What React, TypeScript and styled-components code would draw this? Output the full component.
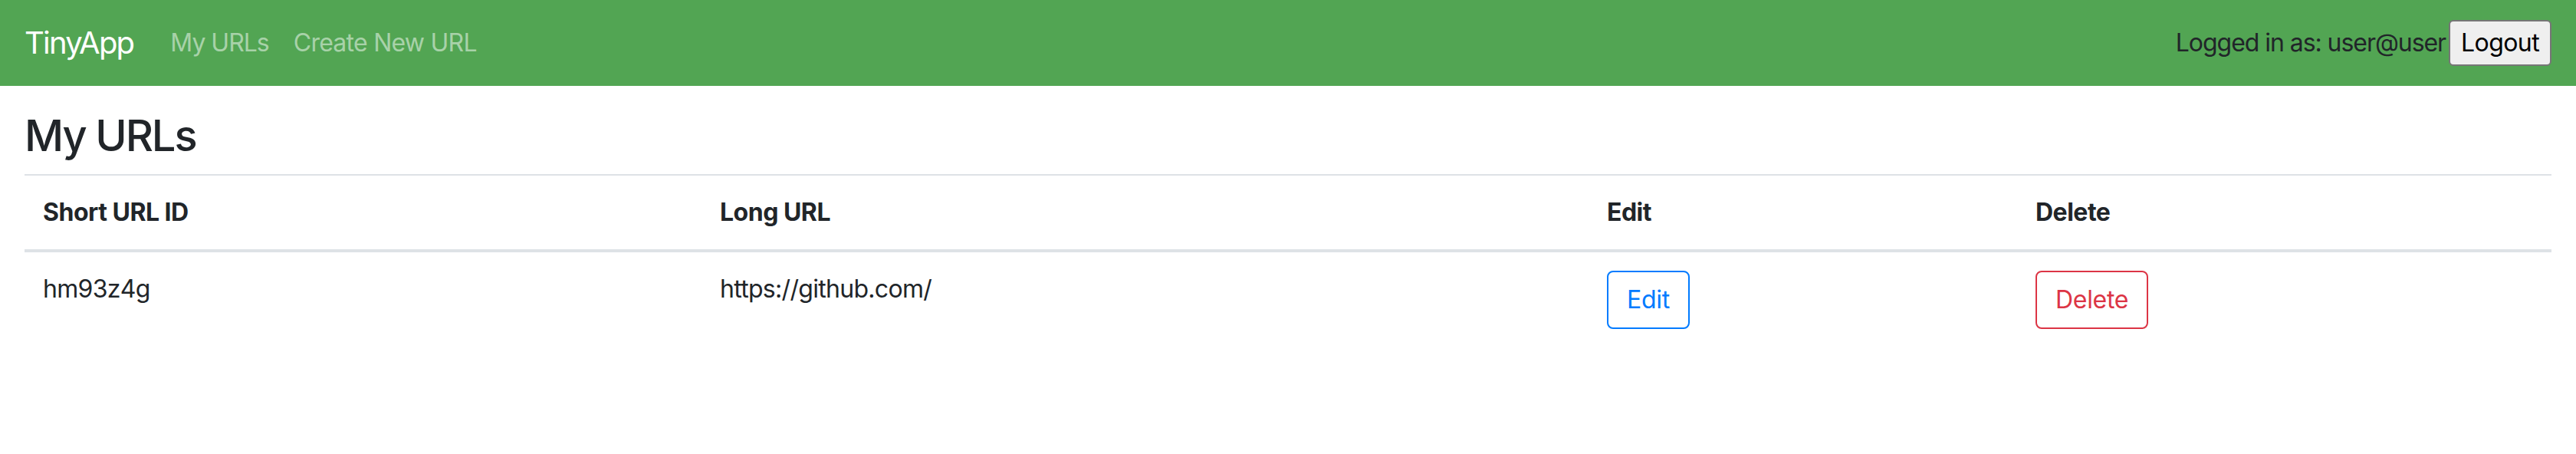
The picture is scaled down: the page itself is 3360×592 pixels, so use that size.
import React from "react";
import styled, { createGlobalStyle } from "styled-components";

const GlobalStyle = createGlobalStyle`
  *, *::before, *::after { box-sizing: border-box; }
  html, body { margin: 0; padding: 0; background: #fff; }
  body {
    font-family: Inter, "Noto Sans", "Liberation Sans", sans-serif;
    font-size: 32px;
    line-height: 1.5;
    color: #212529;
  }
`;

const NavBar = styled.nav`
  display: flex;
  align-items: center;
  justify-content: space-between;
  height: 112px;
  padding: 16px 32px;
  background: #52a553;
`;

const NavLeft = styled.div`
  display: flex;
  align-items: center;
`;

const Brand = styled.a`
  font-size: 40px;
  line-height: 60px;
  padding: 10px 0;
  margin-right: 32px;
  color: #fff;
  text-decoration: none;
  letter-spacing: -1.8px;
`;

const NavLink = styled.a<{ $ls: number }>`
  padding: 16px;
  font-size: 32px;
  line-height: 48px;
  color: rgba(255, 255, 255, 0.5);
  text-decoration: none;
  letter-spacing: ${(p) => p.$ls}px;
`;

const NavRight = styled.div`
  display: flex;
  align-items: center;
`;

const UserText = styled.span`
  font-size: 32px;
  line-height: 48px;
  color: #212529;
  letter-spacing: -1.05px;
  margin-right: 4px;
`;

const LogoutButton = styled.button`
  height: 60px;
  padding: 0 14px;
  font-family: inherit;
  font-size: 32px;
  line-height: 48px;
  color: #000;
  background: #efefef;
  border: 2px solid #767676;
  border-radius: 6px;
  letter-spacing: -0.6px;
`;

const Main = styled.main`
  padding: 32px 32px 0;
`;

const Title = styled.h1`
  margin: 0 0 16px;
  font-size: 56px;
  font-weight: 500;
  line-height: 1.2;
  color: #212529;
  letter-spacing: -2.1px;
`;

const Table = styled.table`
  width: 100%;
  border-collapse: collapse;
  color: #212529;
`;

const HeadCell = styled.th<{ $w: number }>`
  width: ${(p) => p.$w}px;
  padding: 24px;
  text-align: left;
  font-weight: 700;
  line-height: 48px;
  border-top: 2px solid #dee2e6;
  border-bottom: 4px solid #dee2e6;
  vertical-align: bottom;
  letter-spacing: -0.5px;
`;

const Cell = styled.td`
  padding: 24px;
  line-height: 48px;
  vertical-align: top;
  border-top: 2px solid #dee2e6;
  letter-spacing: -0.7px;
`;

const OutlineButton = styled.button<{ $color: string }>`
  display: inline-block;
  padding: 12px 24px;
  font-family: inherit;
  font-size: 32px;
  line-height: 48px;
  color: ${(p) => p.$color};
  background: transparent;
  border: 2px solid ${(p) => p.$color};
  border-radius: 8px;
  letter-spacing: -0.3px;
  cursor: pointer;
`;

const rows = [{ id: "hm93z4g", url: "https://github.com/" }];

export default function App() {
  return (
    <>
      <GlobalStyle />
      <NavBar>
        <NavLeft>
          <Brand href="#">TinyApp</Brand>
          <NavLink href="#" $ls={-1.0}>My URLs</NavLink>
          <NavLink href="#" $ls={-0.75}>Create New URL</NavLink>
        </NavLeft>
        <NavRight>
          <UserText>Logged in as: user@user</UserText>
          <LogoutButton>Logout</LogoutButton>
        </NavRight>
      </NavBar>
      <Main>
        <Title>My URLs</Title>
        <Table>
          <thead>
            <tr>
              <HeadCell $w={883}>Short URL ID</HeadCell>
              <HeadCell $w={1157}>Long URL</HeadCell>
              <HeadCell $w={559}>Edit</HeadCell>
              <HeadCell $w={697}>Delete</HeadCell>
            </tr>
          </thead>
          <tbody>
            {rows.map((r) => (
              <tr key={r.id}>
                <Cell>{r.id}</Cell>
                <Cell>{r.url}</Cell>
                <Cell>
                  <OutlineButton $color="#007bff">Edit</OutlineButton>
                </Cell>
                <Cell>
                  <OutlineButton $color="#dc3545">Delete</OutlineButton>
                </Cell>
              </tr>
            ))}
          </tbody>
        </Table>
      </Main>
    </>
  );
}
